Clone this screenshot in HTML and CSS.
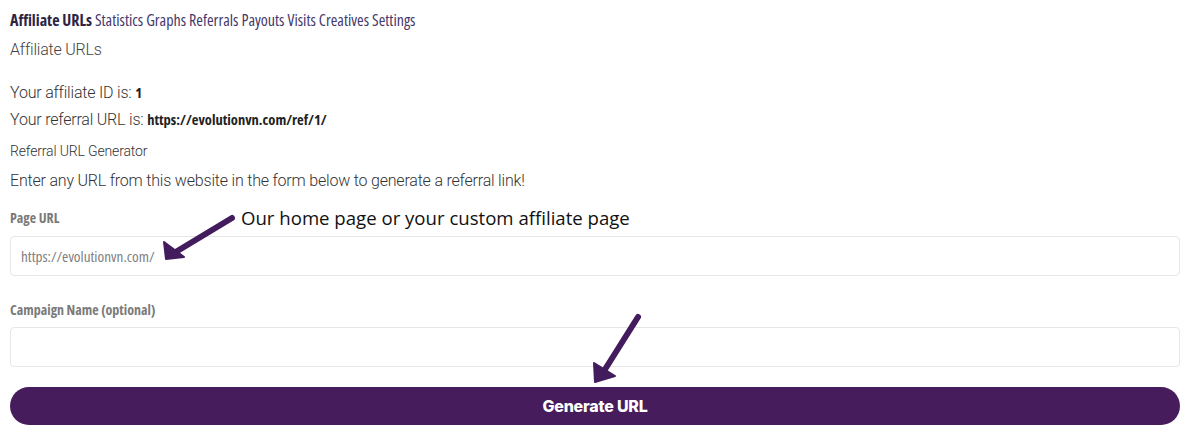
FILE: index.html
```html
<!DOCTYPE html>
<html lang="en">
<head>
<meta charset="utf-8">
<title>Affiliate URLs</title>
<link rel="stylesheet" href="styles.css">
</head>
<body>
<div class="page">
  <nav class="tabs">
    <a class="tab active">Affiliate URLs</a>
    <a class="tab">Statistics</a>
    <a class="tab">Graphs</a>
    <a class="tab">Referrals</a>
    <a class="tab">Payouts</a>
    <a class="tab">Visits</a>
    <a class="tab">Creatives</a>
    <a class="tab">Settings</a>
  </nav>
  <h4 class="section-title">Affiliate URLs</h4>
  <p class="info first">Your affiliate ID is: <strong class="value">1</strong></p>
  <p class="info">Your referral URL is: <strong class="value">https://evolutionvn.com/ref/1/</strong></p>
  <h5 class="gen-title">Referral URL Generator</h5>
  <p class="info intro">Enter any URL from this website in the form below to generate a referral link!</p>
  <form class="gen-form">
    <label class="field-label first-label">Page URL</label>
    <div class="input-box"><span class="input-value">https://evolutionvn.com/</span></div>
    <label class="field-label second-label">Campaign Name (optional)</label>
    <div class="input-box"></div>
    <div class="btn">Generate URL</div>
  </form>
</div>
<span class="note">Our home page or your custom affiliate page</span>
<svg class="arrows" width="1193" height="445" viewBox="0 0 1193 445">
  <g fill="#421c5c" stroke="#421c5c" stroke-linecap="round" stroke-linejoin="round">
    <line x1="232" y1="218" x2="174" y2="253" stroke-width="6"/>
    <polygon points="166,259 164,242 184,257" stroke-width="2"/>
    <line x1="638" y1="317" x2="604" y2="371" stroke-width="6"/>
    <polygon points="595,382 594,363 615,376" stroke-width="2"/>
  </g>
</svg>
</body>
</html>
```
FILE: styles.css
```css
html, body {
  margin: 0;
  padding: 0;
  background: #ffffff;
}

body {
  font-family: Roboto, "Liberation Sans", sans-serif;
  color: #333333;
  position: relative;
  width: 1193px;
  height: 445px;
  overflow: hidden;
}

.page {
  margin-left: 10px;
  width: 1170px;
  padding-top: 8px;
}

.tabs {
  display: flex;
  gap: 3px;
  font-family: "Open Sans", sans-serif;
  font-stretch: 75%;
  font-size: 16px;
  line-height: 24px;
}

.tab {
  color: #45386a;
  text-decoration: none;
}

.tab.active {
  color: #2c2444;
  font-weight: 700;
}

.section-title {
  margin: 6px 0 0;
  font-size: 16px;
  font-weight: 300;
  line-height: 24px;
  letter-spacing: -0.2px;
  color: #444444;
}

.info {
  margin: 1px 0 0;
  font-size: 16px;
  font-weight: 300;
  line-height: 26px;
  letter-spacing: -0.2px;
  color: #333333;
}

.info.first {
  margin-top: 18px;
}

.info.intro {
  margin-top: 6px;
}

.value {
  font-family: "Open Sans", sans-serif;
  font-stretch: 75%;
  font-weight: 700;
  font-size: 14.5px;
  letter-spacing: 0;
  color: #222222;
}

.gen-title {
  margin: 7px 0 0;
  font-size: 14px;
  font-weight: 300;
  line-height: 22px;
  letter-spacing: -0.15px;
  color: #333333;
}

.gen-form {
  display: flex;
  flex-direction: column;
  margin: 0;
}

.field-label {
  font-family: "Open Sans", sans-serif;
  font-stretch: 75%;
  font-weight: 700;
  font-size: 14px;
  line-height: 22px;
  color: #7a7a7a;
}

.first-label {
  margin-top: 13px;
}

.second-label {
  margin-top: 23px;
}

.input-box {
  box-sizing: border-box;
  height: 40px;
  margin-top: 7px;
  border: 1px solid #e6e6e6;
  border-radius: 4px;
  display: flex;
  align-items: center;
  padding: 0 10px;
}

.second-label + .input-box {
  margin-top: 6px;
}

.input-value {
  font-family: "Open Sans", sans-serif;
  font-stretch: 75%;
  font-size: 15.2px;
  color: #808080;
}

.btn {
  margin-top: 20px;
  height: 38px;
  border-radius: 19px;
  background: #461c5c;
  color: #ffffff;
  display: flex;
  align-items: center;
  justify-content: center;
  font-family: Inter, "Liberation Sans", sans-serif;
  font-weight: 800;
  font-size: 16px;
  letter-spacing: -0.2px;
}

.note {
  position: absolute;
  left: 241px;
  top: 206px;
  font-family: "Open Sans", sans-serif;
  font-size: 18.6px;
  line-height: 24px;
  color: #111111;
}

.arrows {
  position: absolute;
  left: 0;
  top: 0;
  pointer-events: none;
}
```
